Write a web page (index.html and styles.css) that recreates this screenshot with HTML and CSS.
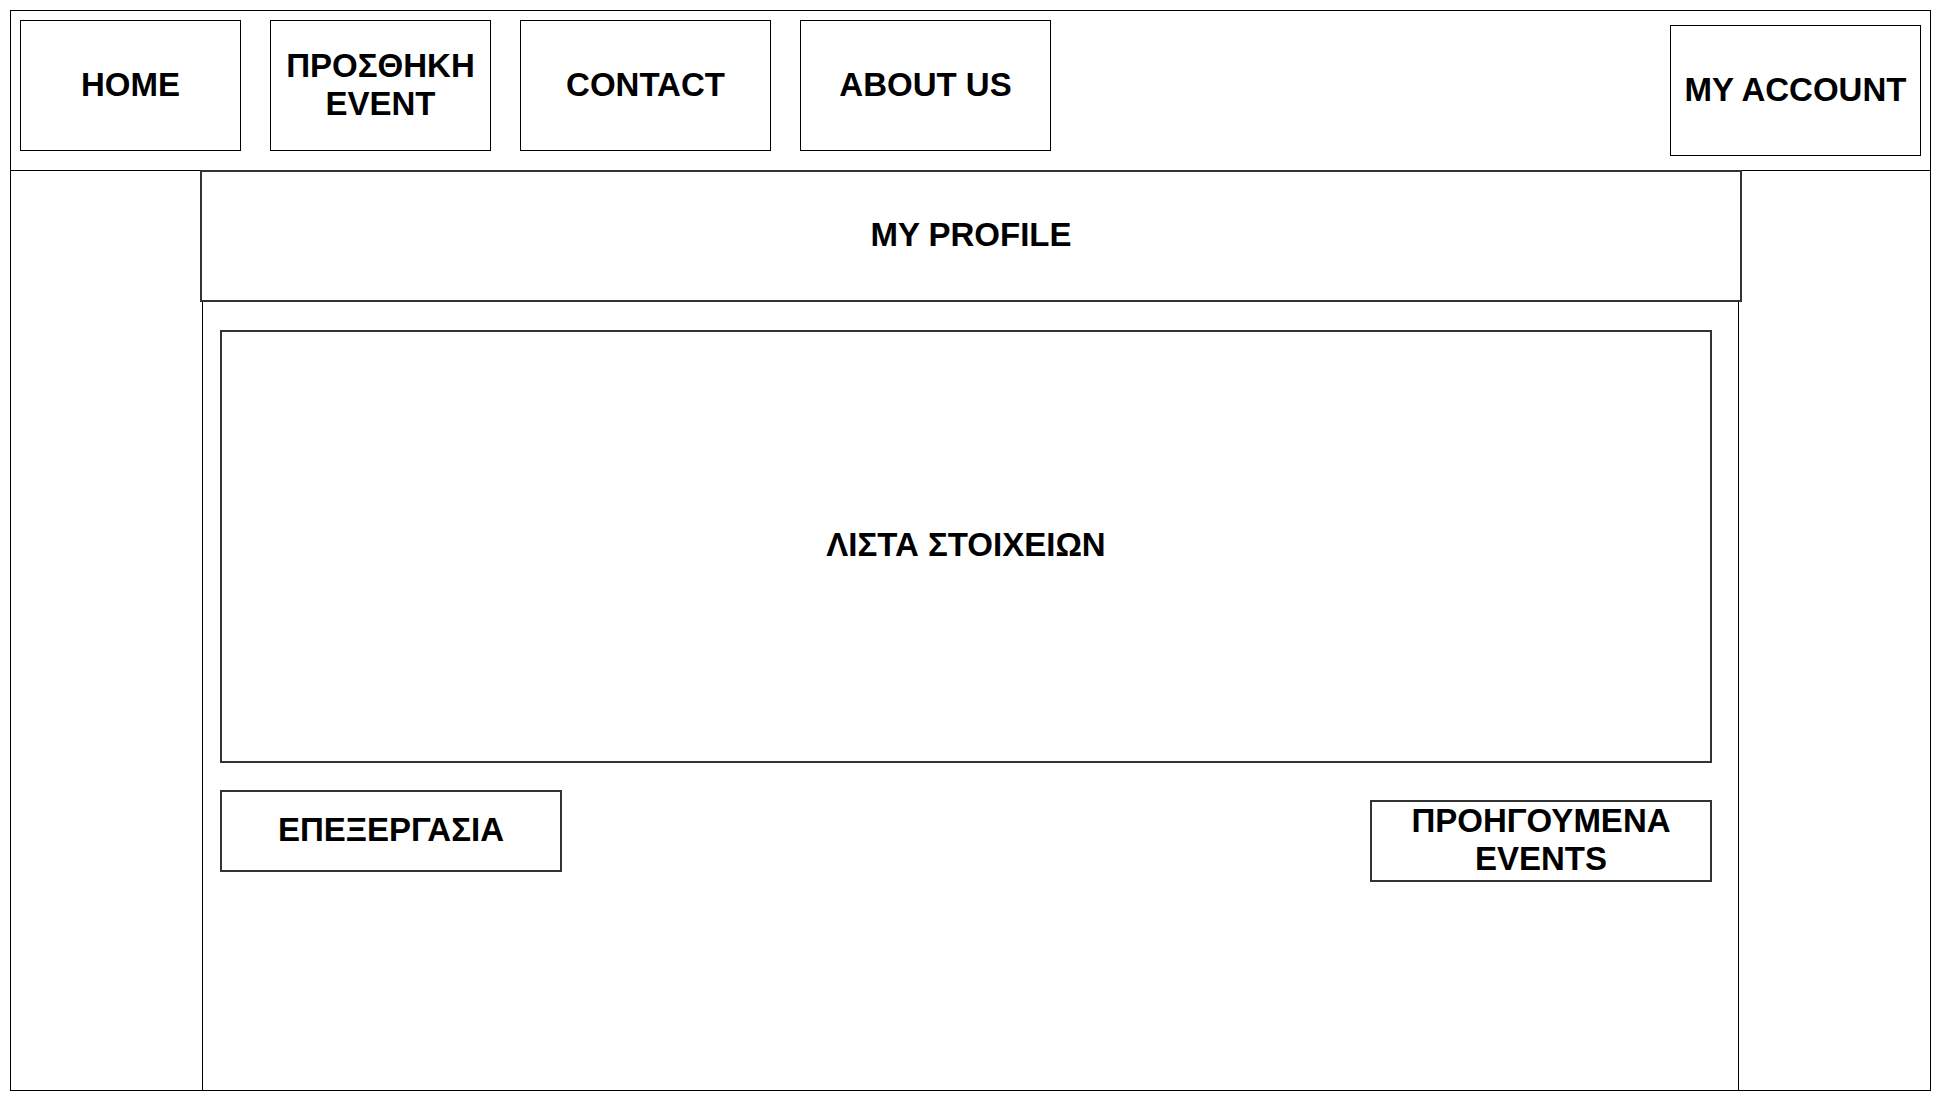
FILE: index.html
```html
<!DOCTYPE html>
<html lang="el">
<head>
  <meta charset="UTF-8" />
  <meta name="viewport" content="width=device-width, initial-scale=1" />
  <title>My Profile</title>
  <link rel="stylesheet" href="styles.css">
</head>
<body>

  <div class="frame">
    <header class="topbar">
      <nav class="nav">
        <a class="nav-btn btn-small" href="#">HOME</a>
        <a class="nav-btn btn-small" href="#">ΠΡΟΣΘΗΚΗ<br>EVENT</a>
        <a class="nav-btn btn-wide" href="#">CONTACT</a>
        <a class="nav-btn btn-wide" href="#">ABOUT US</a>
      </nav>
      <a class="nav-btn btn-account" href="#">MY ACCOUNT</a>
    </header>

    <main class="main">
      <div class="profile-title">MY PROFILE</div>
      <section class="column">
        <div class="details">ΛΙΣΤΑ ΣΤΟΙΧΕΙΩΝ</div>
        <div class="actions">
          <button class="action">ΕΠΕΞΕΡΓΑΣΙΑ</button>
          <button class="action action-past">ΠΡΟΗΓΟΥΜΕΝΑ<br>EVENTS</button>
        </div>
      </section>
    </main>
  </div>

</body>
</html>
```

FILE: styles.css
```css
* {
  box-sizing: border-box;
}
body {
  margin: 10px;
  font-family: 'Liberation Sans', Arial, sans-serif;
  font-weight: bold;
  font-size: 33px;
  color: #000;
  background: #fff;
}
.frame {
  width: 1921px;
  height: 1081px;
  border: 1px solid #000;
  display: flex;
  flex-direction: column;
}
.topbar {
  height: 160px;
  border-bottom: 1px solid #000;
  padding: 9px 9px 0 9px;
  display: flex;
  justify-content: space-between;
  align-items: flex-start;
}
.nav {
  display: flex;
  gap: 29px;
}
.nav-btn {
  display: flex;
  align-items: center;
  justify-content: center;
  text-align: center;
  height: 131px;
  padding-bottom: 2px;
  border: 1px solid #000;
  color: #000;
  text-decoration: none;
  line-height: 1.15;
}
.btn-small {
  width: 221px;
}
.btn-wide {
  width: 251px;
}
.btn-account {
  width: 251px;
  margin-top: 5px;
}
.main {
  flex: 1;
  display: flex;
  flex-direction: column;
  padding-left: 189px;
  margin-top: -1px;
}
.profile-title {
  width: 1542px;
  height: 132px;
  padding-bottom: 3px;
  border: 2px solid #333;
  display: flex;
  align-items: center;
  justify-content: center;
}
.column {
  flex: 1;
  width: 1537px;
  margin-left: 2px;
  border-left: 1px solid #000;
  border-right: 1px solid #000;
  padding: 28px 0 0 17px;
}
.details {
  width: 1492px;
  height: 433px;
  padding-bottom: 3px;
  border: 2px solid #333;
  display: flex;
  align-items: center;
  justify-content: center;
}
.actions {
  width: 1492px;
  margin-top: 27px;
  display: flex;
  justify-content: space-between;
  align-items: flex-start;
}
.action {
  width: 342px;
  height: 82px;
  border: 2px solid #333;
  background: #fff;
  font: inherit;
  color: #000;
  line-height: 1.15;
  padding: 0 0 2px 0;
  cursor: pointer;
}
.action-past {
  margin-top: 10px;
}
```
